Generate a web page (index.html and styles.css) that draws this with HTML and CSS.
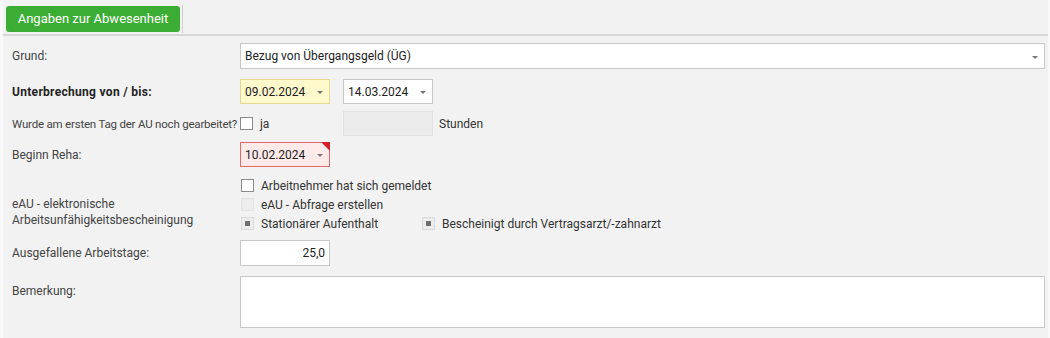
FILE: index.html
```html
<!DOCTYPE html>
<html lang="de">
<head>
<meta charset="utf-8">
<link rel="stylesheet" href="styles.css">
</head>
<body>
<div class="page">
  <div class="tabbar">
    <div class="tab-active">Angaben zur Abwesenheit</div>
    <div class="tab-sep"></div>
  </div>
  <div class="panel">
    <div class="row r-grund">
      <div class="label">Grund:</div>
      <div class="field">
        <div class="box select wide"><span>Bezug von Übergangsgeld (ÜG)</span><span class="arrow"></span></div>
      </div>
    </div>
    <div class="row r-unter">
      <div class="label bold">Unterbrechung von / bis:</div>
      <div class="field">
        <div class="box date yellow"><span>09.02.2024</span><span class="arrow"></span></div>
        <div class="box date second"><span>14.03.2024</span><span class="arrow"></span></div>
      </div>
    </div>
    <div class="row r-wurde">
      <div class="label tight">Wurde am ersten Tag der AU noch gearbeitet?</div>
      <div class="field">
        <span class="cb"></span><span class="cb-text ja">ja</span>
        <div class="box hours"></div>
        <span class="stunden">Stunden</span>
      </div>
    </div>
    <div class="row r-reha">
      <div class="label">Beginn Reha:</div>
      <div class="field">
        <div class="box date error"><span>10.02.2024</span><span class="arrow"></span><span class="flag"></span></div>
      </div>
    </div>
    <div class="row r-eau">
      <div class="label eau-label">eAU - elektronische<br>Arbeitsunfähigkeitsbescheinigung</div>
      <div class="checks">
        <div class="check-line"><span class="cb"></span><span class="cb-text">Arbeitnehmer hat sich gemeldet</span></div>
        <div class="check-line"><span class="cb disabled"></span><span class="cb-text">eAU - Abfrage erstellen</span></div>
        <div class="check-line">
          <span class="cb filled"></span><span class="cb-text stat">Stationärer Aufenthalt</span>
          <span class="cb filled"></span><span class="cb-text">Bescheinigt durch Vertragsarzt/-zahnarzt</span>
        </div>
      </div>
    </div>
    <div class="row r-tage">
      <div class="label">Ausgefallene Arbeitstage:</div>
      <div class="field">
        <div class="box num">25,0</div>
      </div>
    </div>
    <div class="row r-bem">
      <div class="label bem-label">Bemerkung:</div>
      <div class="field">
        <div class="box textarea"></div>
      </div>
    </div>
  </div>
</div>
</body>
</html>
```
FILE: styles.css
```css
* { box-sizing: border-box; }
html, body { margin: 0; padding: 0; }
body {
  background: #f9f9f9;
  font-family: Roboto, "Noto Sans", sans-serif;
  font-size: 12px;
  color: #333;
  width: 1050px;
  height: 338px;
  overflow: hidden;
}
.page {
  margin-left: 3px;
  width: 1045px;
  height: 338px;
  background: #f2f2f2;
}
.tabbar {
  height: 36px;
  display: flex;
  align-items: flex-start;
  padding: 6px 0 0 3px;
  border-bottom: 2px solid #d6d6d6;
}
.tab-active {
  width: 174px;
  height: 26px;
  background: #3cad34;
  color: #fff;
  border-radius: 3px;
  font-size: 13px;
  line-height: 26px;
  text-align: center;
}
.tab-sep {
  width: 1px;
  height: 28px;
  margin: -1px 0 0 2px;
  background: #cfcfcf;
}
.panel {
  padding: 7px 0 0 9px;
}
.row {
  display: flex;
  align-items: center;
}
.label {
  width: 228px;
  flex: none;
  color: #444;
  line-height: 16px;
  white-space: nowrap;
}
.tight { font-size: 11.5px; letter-spacing: -0.2px; }
.bold { font-weight: bold; color: #222; letter-spacing: 0.3px; }
.field {
  display: flex;
  align-items: center;
  flex: 1;
  align-self: stretch;
}
.r-grund { height: 26px; }
.r-unter { height: 25px; margin-top: 10px; }
.r-wurde { height: 25px; margin-top: 7px; }
.r-reha { height: 25px; margin-top: 6px; }
.r-eau { margin-top: 9px; align-items: flex-start; }
.r-tage { height: 26px; margin-top: 7px; }
.r-bem { margin-top: 10px; align-items: flex-start; }

.box {
  position: relative;
  background: #fff;
  border: 1px solid #c8c8c8;
  height: 100%;
  display: flex;
  align-items: center;
  padding: 0 0 0 4px;
  color: #222;
}
.wide { width: 805px; }
.select { justify-content: space-between; padding-right: 6px; }
.date { width: 90px; justify-content: space-between; padding-right: 6px; }
.second { margin-left: 13px; }
.yellow { background: #fff9cc; border-color: #e3d88f; }
.error { background: #ffeaea; border-color: #e06a6a; }
.arrow {
  width: 0; height: 0;
  border-left: 3px solid transparent;
  border-right: 3px solid transparent;
  border-top: 3px solid #777;
  margin-top: 2px;
}
.flag {
  position: absolute;
  top: -1px; right: -1px;
  width: 0; height: 0;
  border-top: 9px solid #d41f2b;
  border-left: 9px solid transparent;
}
.cb {
  display: inline-block;
  width: 13px; height: 13px;
  border: 1px solid #8a8a8a;
  background: #fff;
  flex: none;
  position: relative;
}
.cb.disabled { border-color: #e4e4e4; background: #ededed; }
.cb.filled { border-color: #dadada; background: #ececec; }
.cb.filled::after {
  content: "";
  position: absolute;
  left: 3px; top: 3px;
  width: 5px; height: 5px;
  background: #6e6e6e;
}
.cb-text { margin-left: 7px; color: #333; }
.ja { margin-left: 7px; width: 83px; }
.hours { width: 90px; background: #ececec; border-color: #e2e2e2; }
.stunden { margin-left: 6px; }
.checks { display: flex; flex-direction: column; margin-left: 1px; }
.check-line { height: 19px; display: flex; align-items: center; }
.stat { width: 161px; }
.eau-label { padding-top: 20px; }
.num { width: 90px; justify-content: flex-end; padding-right: 4px; }
.textarea { width: 805px; height: 52px; }
.bem-label { padding-top: 7px; }
```
